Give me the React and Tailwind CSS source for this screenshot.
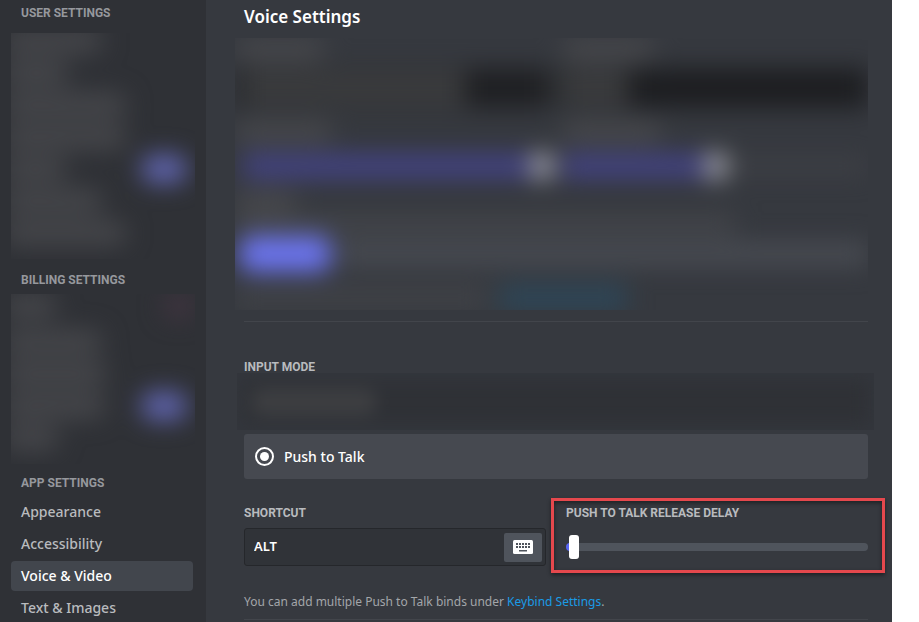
import React from "react";

const NAV = ["Appearance", "Accessibility", "Voice & Video", "Text & Images"];

function Bar({ className }) {
  return <div className={`h-6 rounded-full bg-[#46474b] ${className}`} />;
}

function HiddenRow({ className, badge = false }) {
  return (
    <div className="flex h-8 shrink-0 items-center justify-between">
      <Bar className={className} />
      {badge && <div className="mr-2 h-7 w-[46px] rounded-full bg-[#6065b0]" />}
    </div>
  );
}

function SectionTitle({ children, className = "" }) {
  return (
    <h2
      className={`font-['Roboto',sans-serif] text-xs font-bold leading-4 text-[#96989d] ${className}`}
    >
      {children}
    </h2>
  );
}

function Sidebar() {
  return (
    <aside className="flex w-[206px] shrink-0 flex-col bg-[#2f3136] px-[11px] pt-[5px]">
      <SectionTitle className="pl-[10px]">USER SETTINGS</SectionTitle>
      <div className="mt-3 h-[226px] shrink-0 overflow-hidden" aria-hidden="true">
        <div className="-mt-2 -ml-2 blur-[12px]">
          <HiddenRow className="w-[100px]" />
          <HiddenRow className="w-[66px]" />
          <HiddenRow className="w-[124px]" />
          <HiddenRow className="w-[124px]" />
          <HiddenRow className="w-[64px]" badge />
          <HiddenRow className="w-[100px]" />
          <HiddenRow className="w-[124px]" />
        </div>
      </div>
      <SectionTitle className="mt-[13px] pl-[10px]">BILLING SETTINGS</SectionTitle>
      <div className="mt-[6px] h-[170px] shrink-0 overflow-hidden" aria-hidden="true">
        <div className="-ml-2 blur-[12px]">
          <div className="flex h-8 items-start justify-between">
            <Bar className="w-[54px]" />
            <div className="h-6 w-8 rounded-full bg-[#413440]" />
          </div>
          <HiddenRow className="w-[100px]" />
          <HiddenRow className="w-[104px]" />
          <HiddenRow className="w-[103px]" badge />
          <HiddenRow className="w-[56px]" />
        </div>
      </div>
      <SectionTitle className="mt-[11px] pl-[10px]">APP SETTINGS</SectionTitle>
      <nav className="mt-[6px] mr-[2px] flex flex-col gap-[2px]">
        {NAV.map((name) => (
          <a
            key={name}
            href="#"
            aria-current={name === "Voice & Video" ? "page" : undefined}
            className={`h-[30px] shrink-0 rounded px-[10px] text-sm font-medium leading-[30px] ${
              name === "Voice & Video" ? "bg-[#42464d] text-white" : "text-[#b9bbbe]"
            }`}
          >
            {name}
          </a>
        ))}
      </nav>
    </aside>
  );
}

function HiddenVoicePanel() {
  return (
    <div className="-ml-[9px] h-[272px] overflow-hidden" aria-hidden="true">
      <div className="blur-[12px]">
        <div className="flex">
          <Bar className="w-[90px]" />
          <div className="flex-1" />
          <div className="w-[306px]">
            <Bar className="w-[92px]" />
          </div>
        </div>
        <div className="mt-[6px] flex">
          <div className="flex h-10 flex-1 items-center bg-[#1f2023] pl-2">
            <div className="h-9 w-[222px] bg-[#3a3b3d]" />
          </div>
          <div className="h-10 w-[18px] bg-[#2b2d30]" />
          <div className="flex h-10 w-[306px] items-center bg-[#1d1e21]">
            <div className="h-9 w-[66px] bg-[#3a3b3d]" />
          </div>
        </div>
        <div className="mt-3 flex">
          <Bar className="w-[98px]" />
          <div className="flex-1" />
          <div className="w-[306px]">
            <Bar className="w-[100px]" />
          </div>
        </div>
        <div className="mt-[6px] flex h-8 items-center">
          <div className="ml-2 h-6 flex-1 bg-[#434384]" />
          <div className="mr-2 h-7 w-6 rounded-full bg-[#a0a1a9]" />
          <div className="flex h-8 w-[306px] items-center">
            <div className="h-6 w-[142px] bg-[#434384]" />
            <div className="h-7 w-6 rounded-full bg-[#a0a1a9]" />
            <div className="h-4 flex-1 bg-[#3e4046]" />
          </div>
        </div>
        <Bar className="mt-2 w-[62px]" />
        <div className="h-5 w-[500px] bg-[#43454a]" />
        <div className="flex h-10 items-center gap-2">
          <div className="ml-1 h-9 w-[92px] rounded-xl bg-[#6c75f0]" />
          <div className="h-6 flex-1 bg-[#484b52]" />
        </div>
        <div className="mt-2 flex h-8 items-center gap-3">
          <div className="h-6 w-[252px] bg-[#404247]" />
          <div className="h-7 w-[128px] bg-[#2e4657]" />
        </div>
      </div>
    </div>
  );
}

function FieldLabel({ children, htmlFor }) {
  return (
    <label
      htmlFor={htmlFor}
      className="block font-['Roboto',sans-serif] text-xs font-bold leading-4 text-[#b9bbbe]"
    >
      {children}
    </label>
  );
}

function KeyboardIcon() {
  return (
    <svg width="20" height="14" viewBox="0 0 20 14" aria-hidden="true">
      <rect width="20" height="14" rx="1.5" fill="#fff" />
      <g fill="#4f545c">
        {[3, 6, 9, 12, 15].map((x) => (
          <React.Fragment key={x}>
            <rect x={x} y="3" width="2" height="2" />
            <rect x={x} y="6" width="2" height="2" />
          </React.Fragment>
        ))}
        <rect x="6" y="10" width="8" height="1.5" />
      </g>
    </svg>
  );
}

export default function App() {
  return (
    <div className="h-screen overflow-hidden bg-white pr-[27px] font-['Noto_Sans',sans-serif]">
      <div className="flex h-full bg-[#36393f]">
        <Sidebar />
        <main className="min-w-0 flex-1 pl-[38px] pr-6 pt-[5px]">
          <h1 className="text-[17px] font-semibold leading-6 text-white">Voice Settings</h1>
          <div className="mt-[9px]">
            <HiddenVoicePanel />
          </div>
          <hr className="mt-[11px] border-[#42454b]" />

          <fieldset className="mt-[37px]">
            <legend className="font-['Roboto',sans-serif] text-xs font-bold leading-4 text-[#b9bbbe]">
              INPUT MODE
            </legend>
            <div
              className="-ml-[7px] -mr-[6px] mt-[-2px] h-[57px] overflow-hidden bg-[#33363c]"
              aria-hidden="true"
            >
              <div className="mx-[6px] mt-2 flex h-[42px] items-center bg-[#2f3136] pl-2 blur-[8px]">
                <div className="h-7 w-[126px] rounded-full bg-[#3d3e41]" />
              </div>
            </div>
            <label className="mt-1 flex h-[45px] items-center gap-[10px] rounded-[3px] bg-[#464950] px-[11px] text-sm font-medium text-white">
              <input
                type="radio"
                name="input-mode"
                defaultChecked
                className="grid size-[19px] appearance-none place-items-center rounded-full border-2 border-white before:size-[9px] before:rounded-full before:bg-white"
              />
              Push to Talk
            </label>
          </fieldset>

          <div className="mt-[26px] flex gap-5">
            <div className="min-w-0 flex-1">
              <FieldLabel htmlFor="shortcut">SHORTCUT</FieldLabel>
              <div className="mt-[7px] flex h-[38px] items-center rounded-[3px] border border-[#25272b] bg-[#303338] pl-[9px] pr-[3px]">
                <input
                  id="shortcut"
                  readOnly
                  defaultValue="ALT"
                  className="min-w-0 flex-1 bg-transparent text-[13px] font-semibold text-white outline-none"
                />
                <button
                  type="button"
                  aria-label="Record shortcut"
                  className="grid h-[29px] w-[38px] place-items-center rounded-[2px] bg-[#4f545c]"
                >
                  <KeyboardIcon />
                </button>
              </div>
            </div>
            <div className="relative w-[302px]">
              <div className="pointer-events-none absolute -left-[15px] -right-[17px] -top-[7px] h-[75px] border-[3px] border-[#e5484d] shadow-[0_2px_4px_rgba(0,0,0,0.45),inset_0_2px_4px_rgba(0,0,0,0.45)]" />
              <FieldLabel htmlFor="delay">PUSH TO TALK RELEASE DELAY</FieldLabel>
              <input
                id="delay"
                type="range"
                min="0"
                max="100"
                defaultValue="1"
                className="mt-[14px] block h-6 w-full appearance-none bg-transparent [&::-webkit-slider-runnable-track]:h-2 [&::-webkit-slider-runnable-track]:rounded-full [&::-webkit-slider-runnable-track]:bg-[linear-gradient(to_right,#5865f2_6px,#4f545c_6px)] [&::-webkit-slider-thumb]:-mt-2 [&::-webkit-slider-thumb]:h-6 [&::-webkit-slider-thumb]:w-[10px] [&::-webkit-slider-thumb]:appearance-none [&::-webkit-slider-thumb]:rounded-[3px] [&::-webkit-slider-thumb]:bg-white"
              />
            </div>
          </div>

          <p className="mt-[27px] text-xs leading-[18px] text-[#a3a6aa]">
            You can add multiple Push to Talk binds under{" "}
            <a href="#" className="text-[#1a9ce6]">
              Keybind Settings
            </a>
            .
          </p>
          <hr className="mt-2 border-[#42454b]" />
        </main>
      </div>
    </div>
  );
}
